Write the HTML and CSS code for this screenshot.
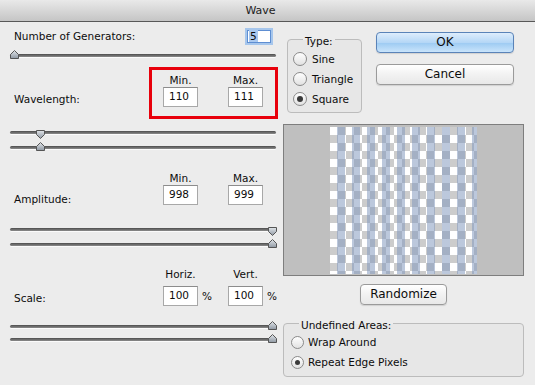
FILE: index.html
```html
<!DOCTYPE html>
<html lang="en">
<head>
    <meta charset="UTF-8">
    <title>Wave</title>
    <link rel="stylesheet" href="styles.css">
</head>
<body>
  <svg class="defs" width="0" height="0">
    <defs>
      <linearGradient id="tg" x1="0" y1="0" x2="0" y2="1">
        <stop offset="0" stop-color="#e2e6ea"/>
        <stop offset="1" stop-color="#8f98a3"/>
      </linearGradient>
    </defs>
  </svg>
  <div class="window">
    <div class="titlebar">Wave</div>
    <div class="dialog">
      <div class="controls">
        <div class="gen-row">
          <span class="label">Number of Generators:</span>
          <span class="num focus"><span class="sel">5</span></span>
        </div>
        <div class="slider">
          <div class="track"></div>
          <svg class="thumb" style="left:0px" width="9" height="9" viewBox="0 0 9 9"><path d="M4.5 .5 8.5 4.5v4H.5v-4z" fill="url(#tg)" stroke="#555"/></svg>
        </div>

        <div class="param wave">
          <span class="label">Wavelength:</span>
          <div class="fields marked">
            <span class="head">Min.</span>
            <span class="head">Max.</span>
            <span class="num">110</span>
            <span class="num">111</span>
          </div>
        </div>
        <div class="slider">
          <div class="track"></div>
          <svg class="thumb down" style="left:26px" width="9" height="9" viewBox="0 0 9 9"><path d="M.5 .5h8v4l-4 4-4-4z" fill="url(#tg)" stroke="#555"/></svg>
        </div>
        <div class="slider">
          <div class="track"></div>
          <svg class="thumb" style="left:26px" width="9" height="9" viewBox="0 0 9 9"><path d="M4.5 .5 8.5 4.5v4H.5v-4z" fill="url(#tg)" stroke="#555"/></svg>
        </div>

        <div class="param amp">
          <span class="label">Amplitude:</span>
          <div class="fields">
            <span class="head">Min.</span>
            <span class="head">Max.</span>
            <span class="num">998</span>
            <span class="num">999</span>
          </div>
        </div>
        <div class="slider">
          <div class="track"></div>
          <svg class="thumb down" style="left:258px" width="9" height="9" viewBox="0 0 9 9"><path d="M.5 .5h8v4l-4 4-4-4z" fill="url(#tg)" stroke="#555"/></svg>
        </div>
        <div class="slider">
          <div class="track"></div>
          <svg class="thumb" style="left:258px" width="9" height="9" viewBox="0 0 9 9"><path d="M4.5 .5 8.5 4.5v4H.5v-4z" fill="url(#tg)" stroke="#555"/></svg>
        </div>

        <div class="param scale">
          <span class="label">Scale:</span>
          <div class="fields pct">
            <span class="head">Horiz.</span>
            <span></span>
            <span class="head">Vert.</span>
            <span></span>
            <span class="num">100</span>
            <span class="unit">%</span>
            <span class="num">100</span>
            <span class="unit">%</span>
          </div>
        </div>
        <div class="slider">
          <div class="track"></div>
          <svg class="thumb" style="left:258px" width="9" height="9" viewBox="0 0 9 9"><path d="M4.5 .5 8.5 4.5v4H.5v-4z" fill="url(#tg)" stroke="#555"/></svg>
        </div>
        <div class="slider">
          <div class="track"></div>
          <svg class="thumb" style="left:258px" width="9" height="9" viewBox="0 0 9 9"><path d="M4.5 .5 8.5 4.5v4H.5v-4z" fill="url(#tg)" stroke="#555"/></svg>
        </div>
      </div>

      <div class="side">
        <div class="side-top">
          <div class="group type">
            <span class="group-title">Type:</span>
            <div class="radio-row"><span class="radio"></span>Sine</div>
            <div class="radio-row"><span class="radio"></span>Triangle</div>
            <div class="radio-row"><span class="radio on"></span>Square</div>
          </div>
          <div class="buttons">
            <div class="btn default">OK</div>
            <div class="btn">Cancel</div>
          </div>
        </div>
        <div class="preview-col">
          <div class="preview">
            <div class="pattern"></div>
          </div>
          <div class="btn randomize">Randomize</div>
          <div class="group areas">
            <span class="group-title">Undefined Areas:</span>
            <div class="radio-row"><span class="radio"></span>Wrap Around</div>
            <div class="radio-row"><span class="radio on"></span>Repeat Edge Pixels</div>
          </div>
        </div>
      </div>
    </div>
  </div>
</body>
</html>
```

FILE: styles.css
```css
* {
  margin: 0;
  padding: 0;
  box-sizing: border-box;
}
body {
  font-family: "DejaVu Sans", "Liberation Sans", sans-serif;
  font-size: 10.5px;
  color: #0c0c0c;
  background: #ececec;
}
.defs {
  position: absolute;
}
.window {
  width: 535px;
  height: 385px;
  overflow: hidden;
  background: #ececec;
}
.titlebar {
  height: 22px;
  line-height: 22px;
  padding-right: 14px;
  border-bottom: 1px solid #585858;
  background: linear-gradient(#e9e9e9, #c5c5c5);
  text-align: center;
  font-size: 11px;
  color: #222;
}
.dialog {
  display: flex;
}
.controls {
  width: 280px;
  flex: none;
}
.label {
  line-height: 13px;
  padding-left: 14px;
}

/* generators */
.gen-row {
  display: flex;
  justify-content: space-between;
  align-items: center;
  height: 17px;
  margin-top: 6px;
  padding-right: 9px;
}
.num {
  height: 20px;
  padding-left: 5px;
  border: 1px solid #a8a8a8;
  border-top-color: #8c8c8c;
  background: #fff;
  line-height: 16px;
}
.num.focus {
  width: 24px;
  height: 13px;
  padding-left: 1px;
  border-color: #5e8ed2;
  box-shadow: 0 0 0 2px #a6c6ec;
  line-height: 11px;
}
.sel {
  padding: 0 1px;
  background: #a9c8ef;
}

/* sliders */
.slider {
  position: relative;
  height: 12px;
  padding-top: 5px;
  margin: 0 4px 0 10px;
}
.gen-row + .slider { margin-top: 4px; }
.param.wave + .slider { margin-top: 7px; }
.param.amp + .slider { margin-top: 6px; }
.param.scale + .slider { margin-top: 2px; }
.slider + .slider { margin-top: 3px; }
.param.scale + .slider + .slider { margin-top: 1px; }
.track {
  height: 3px;
  border-radius: 2px;
  background: linear-gradient(#4c4c4c, #8c8c8c);
  box-shadow: 0 1px 0 #fbfbfb;
}
.thumb {
  position: absolute;
  top: 1px;
}
.thumb.down {
  top: 4px;
}

/* parameter blocks */
.param {
  display: flex;
  align-items: flex-end;
}
.param .label {
  width: 149px;
  flex: none;
}
.param.wave { margin-top: 6px; }
.param.wave .label { margin-bottom: 13px; }
.param.amp { margin-top: 12px; }
.param.amp .label { margin-bottom: 11px; }
.param.scale { margin-top: 11px; }
.param.scale .label { margin-bottom: 13px; }
.fields {
  display: grid;
  grid-template-columns: 35px 35px;
  column-gap: 30px;
  padding: 4px 12px 9px 11px;
  border: 3px solid transparent;
}
.fields.marked {
  border-color: #e8000b;
}
.fields.pct {
  grid-template-columns: 35px 30px 35px 12px;
  column-gap: 0;
}
.head {
  text-align: center;
  line-height: 13px;
}
.fields.pct .head {
  margin-bottom: 5px;
}
.unit {
  padding-left: 4px;
  line-height: 20px;
}

/* right side */
.side {
  flex: 1;
  padding-left: 3px;
}
.side-top {
  display: flex;
  align-items: flex-start;
  margin-top: 10px;
  padding-left: 4px;
}
.group {
  position: relative;
  border: 1px solid #bcbcbc;
  border-radius: 4px;
  background: #e7e7e7;
}
.group-title {
  position: absolute;
  top: -5px;
  left: 15px;
  padding: 0 2px;
  line-height: 13px;
  background: linear-gradient(#ececec 0 5px, #e7e7e7 5px);
}
.type {
  width: 75px;
  height: 74px;
  margin-top: 7px;
  padding: 9px 0 0 5px;
}
.radio-row {
  display: flex;
  align-items: center;
  gap: 5px;
  height: 20px;
}
.radio {
  position: relative;
  flex: none;
  width: 14px;
  height: 14px;
  border: 1px solid #8a8a8a;
  border-radius: 50%;
  background: linear-gradient(#fefefe, #e2e2e2);
}
.radio.on::after {
  content: "";
  position: absolute;
  left: 3px;
  top: 3px;
  width: 6px;
  height: 6px;
  border-radius: 50%;
  background: #3a3a3a;
}
.buttons {
  display: flex;
  flex-direction: column;
  gap: 11px;
  width: 138px;
  margin-left: 14px;
}
.btn {
  height: 21px;
  border: 1px solid #9a9a9a;
  border-radius: 4px;
  background: linear-gradient(#ffffff, #f2f2f2 50%, #e8e8e8);
  box-shadow: 0 1px 1px rgba(0, 0, 0, 0.12);
  text-align: center;
  line-height: 19px;
  font-size: 12px;
}
.btn.default {
  border-color: #5a83b8;
  background: linear-gradient(#deedfc, #b5d7f6 50%, #9ccaf2 51%, #c9e4fb);
}
.preview-col {
  width: 241px;
}
.preview {
  display: flex;
  align-items: center;
  justify-content: center;
  height: 152px;
  margin-top: 11px;
  border: 1px solid #7e7e7e;
  background: #bfbfbf;
}
.pattern {
  width: 147px;
  height: 147px;
  background-image:
    repeating-linear-gradient(90deg, transparent 0 7px, rgba(128, 151, 189, 0.53) 7px 15px),
    conic-gradient(#ccc 0 25%, #fff 0 50%, #ccc 0 75%, #fff 0);
  background-size: auto, 16px 16px;
}
.btn.randomize {
  width: 87px;
  margin: 8px auto 0;
}
.areas {
  height: 54px;
  margin-top: 18px;
  padding: 8px 0 0 7px;
}
.areas .radio-row {
  gap: 4px;
}
.areas .radio {
  width: 13px;
  height: 13px;
}
.areas .radio.on::after {
  left: 3px;
  top: 3px;
  width: 5px;
  height: 5px;
}
```
